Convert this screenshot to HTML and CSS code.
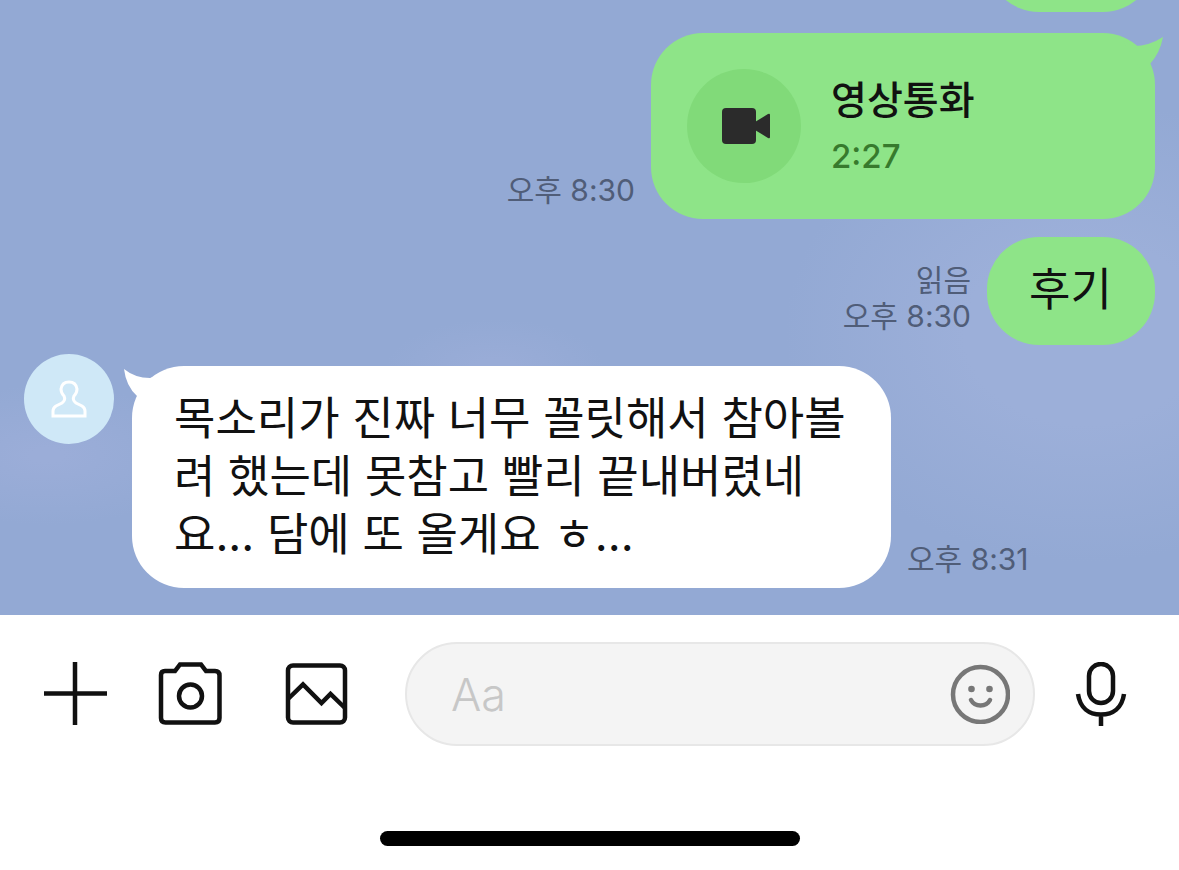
FILE: index.html
```html
<!DOCTYPE html>
<html lang="ko">
<head>
  <meta charset="UTF-8">
  <title>채팅</title>
  <meta name="viewport" content="width=device-width, initial-scale=1">
  <link rel="stylesheet" href="styles.css">
</head>

<body>

  <!-- Messages -->
  <main class="chat">
    <div class="message sent">
      <div class="bubble bubble-short"></div>
    </div>

    <div class="message sent">
      <div class="meta"><time>오후 8:30</time></div>
      <div class="bubble call">
        <svg class="tail tail-right" viewBox="0 0 40 40" aria-hidden="true">
          <path d="M0 8 L11 13 Q26 13 40 4 Q37 20 27 31 L20 40 Z"/>
        </svg>
        <div class="call-icon">
          <svg viewBox="0 0 50 36" aria-hidden="true">
            <rect x="1" width="34" height="36" rx="4"/>
            <path d="M34 14 L47 6 Q49 5 49 7 V29 Q49 31 47 30 L34 22 Z"/>
          </svg>
        </div>
        <div class="call-info">
          <div class="call-title">영상통화</div>
          <div class="call-time">2:27</div>
        </div>
      </div>
    </div>

    <div class="message sent follow">
      <div class="meta"><span>읽음</span><time>오후 8:30</time></div>
      <div class="bubble">후기</div>
    </div>

    <div class="message received">
      <div class="avatar">
        <svg viewBox="0 0 36 38" aria-hidden="true">
          <path d="M2 36 V31 Q2 28 5 26 L11 23 Q15 20 13 16 Q10 13 10 9 Q11 2 18 2 Q25 2 26 9 Q26 13 23 16 Q21 20 25 23 L31 26 Q34 28 34 31 V36 Z"/>
        </svg>
      </div>
      <div class="bubble">
        <svg class="tail tail-left" viewBox="0 0 40 40" aria-hidden="true">
          <path d="M0 3 Q11 12 26 12 L40 8 L20 40 L13 30 Q2 20 0 3 Z"/>
        </svg>
        목소리가 진짜 너무 꼴릿해서 참아볼려 했는데 못참고 빨리 끝내버렸네요... 담에 또 올게요 ㅎ...
      </div>
      <div class="meta"><time>오후 8:31</time></div>
    </div>
  </main>

  <!-- Input bar -->
  <footer class="footer">
    <form class="toolbar">
      <button type="button" class="tool" aria-label="더보기">
        <svg viewBox="0 0 64 64"><path d="M32 0 V63 M1 31.500 H64"/></svg>
      </button>
      <button type="button" class="tool" aria-label="카메라">
        <svg viewBox="0 0 64 64">
          <path d="M7 9 H17 L22 2.500 H43 L48 9 H57 Q61.500 9 61.500 13.500 V56 Q61.500 60.500 57 60.500 H7.500 Q3 60.500 3 56 V13 Q3 9 7 9 Z"/>
          <circle cx="32.500" cy="34" r="11.500"/>
        </svg>
      </button>
      <button type="button" class="tool" aria-label="사진">
        <svg viewBox="0 0 64 64">
          <rect x="3" y="3.500" width="57" height="57" rx="5"/>
          <path d="M3 37 L18 22.500 L36.500 41 L45.500 32 L60 46"/>
        </svg>
      </button>
      <div class="field">
        <input type="text" class="field-input" placeholder="Aa" aria-label="메시지">
        <button type="button" class="emoji" aria-label="이모티콘">
          <svg viewBox="0 0 60 60">
            <circle cx="30.500" cy="30.500" r="27.500"/>
            <path d="M21 36 Q24 41.500 30.500 41.500 Q37 41.500 40 36"/>
            <circle class="eye" cx="21.500" cy="25" r="3.300"/>
            <circle class="eye" cx="39.500" cy="25" r="3.300"/>
          </svg>
        </button>
      </div>
      <button type="button" class="tool mic" aria-label="음성 메시지">
        <svg viewBox="0 0 64 64">
          <rect x="20" y="2" width="24" height="39" rx="12"/>
          <path d="M9 32 C11 46 20 52.500 32 52.500 C44 52.500 53 46 55 32 M32 52 V64"/>
        </svg>
      </button>
    </form>
    <div class="home-bar"></div>
  </footer>

</body>
</html>
```
FILE: styles.css
```css
* {
  box-sizing: border-box;
}

body {
  margin: 0;
  height: 100vh;
  display: flex;
  flex-direction: column;
  font-family: Inter, "Noto Sans CJK KR", sans-serif;
  color: #111;
  background: #fff;
}

button {
  padding: 0;
  border: none;
  background: none;
  cursor: pointer;
}

svg {
  display: block;
}

/* Messages */
.chat {
  flex: 1;
  min-height: 0;
  display: flex;
  flex-direction: column;
  justify-content: flex-end;
  overflow: hidden;
  padding: 0 24px 27px;
  background:
    radial-gradient(ellipse 300px 230px at 92% 54%, #9cafd9 40%, rgba(156, 175, 217, 0) 100%),
    radial-gradient(ellipse 110px 50px at 42% 60%, #99acd7 20%, rgba(153, 172, 215, 0) 100%),
    radial-gradient(ellipse 160px 70px at 4% 74%, #9badd8 10%, rgba(155, 173, 216, 0) 100%),
    #93a9d4;
}

.message {
  display: flex;
  flex-shrink: 0;
  margin-top: 21px;
}

.sent {
  justify-content: flex-end;
}

.follow {
  margin-top: 18px;
}

.received {
  margin-top: 9px;
}

.bubble {
  position: relative;
  max-width: 759px;
  padding: 24px 42px;
  border-radius: 52px;
  font-size: 45px;
  line-height: 58px;
  background: #8ee488;
}

.sent .bubble {
  min-width: 168px;
  min-height: 108px;
}

.received .bubble {
  margin: 12px 0 0 18px;
  background: #fff;
}

.tail {
  position: absolute;
  top: 0;
  width: 40px;
  height: 40px;
  fill: #8ee488;
}

.tail-right {
  right: -8px;
}

.tail-left {
  left: -8px;
  fill: #fff;
}

.meta {
  display: flex;
  flex-direction: column;
  justify-content: flex-end;
  flex-shrink: 0;
  padding: 0 16px 11px;
  text-align: right;
  font-size: 30px;
  line-height: 36px;
  color: #505d78;
}

/* Video call */
.bubble.call {
  display: flex;
  align-items: center;
  gap: 30px;
  width: 504px;
  padding: 36px;
}

.call-icon {
  display: flex;
  align-items: center;
  justify-content: center;
  width: 114px;
  height: 114px;
  border-radius: 50%;
  background: #81da79;
}

.call-icon svg {
  width: 50px;
  height: 36px;
  margin-left: 4px;
  fill: #2b2b2b;
}

.call-title {
  font-size: 39px;
  font-weight: 500;
  line-height: 60px;
}

.call-time {
  font-size: 33px;
  font-weight: 500;
  line-height: 52px;
  color: #377a2d;
}

.avatar {
  display: flex;
  align-items: center;
  justify-content: center;
  flex-shrink: 0;
  width: 90px;
  height: 90px;
  border-radius: 50%;
  background: #cfe8f7;
}

.avatar svg {
  width: 36px;
  height: 38px;
  fill: none;
  stroke: #fff;
  stroke-width: 3;
}

/* Input bar */
.footer {
  padding: 27px 0 24px;
}

.toolbar {
  display: grid;
  grid-template-columns: 115px 127px 120px minmax(0, 1fr) 132px;
  align-items: center;
  padding: 0 12px 0 43px;
}

.tool svg {
  width: 64px;
  height: 64px;
  fill: none;
  stroke: #111;
  stroke-width: 4.5;
}

.mic {
  justify-self: center;
}

.field {
  display: flex;
  align-items: center;
  height: 104px;
  padding: 0 23px 0 44px;
  border: 2px solid #e7e7e7;
  border-radius: 52px;
  background: #f4f4f4;
}

.field-input {
  flex: 1;
  min-width: 0;
  padding: 0;
  border: none;
  outline: none;
  background: none;
  font-family: inherit;
  font-size: 45px;
  font-weight: 300;
  color: #111;
}

.field-input::placeholder {
  color: #c7c7c7;
}

.emoji svg {
  width: 60px;
  height: 60px;
  fill: none;
  stroke: #777;
  stroke-width: 4.5;
  stroke-linecap: round;
}

.emoji .eye {
  fill: #777;
  stroke: none;
}

.home-bar {
  width: 420px;
  max-width: 60%;
  height: 15px;
  margin: 85px auto 0;
  border-radius: 8px;
  background: #000;
}
```
